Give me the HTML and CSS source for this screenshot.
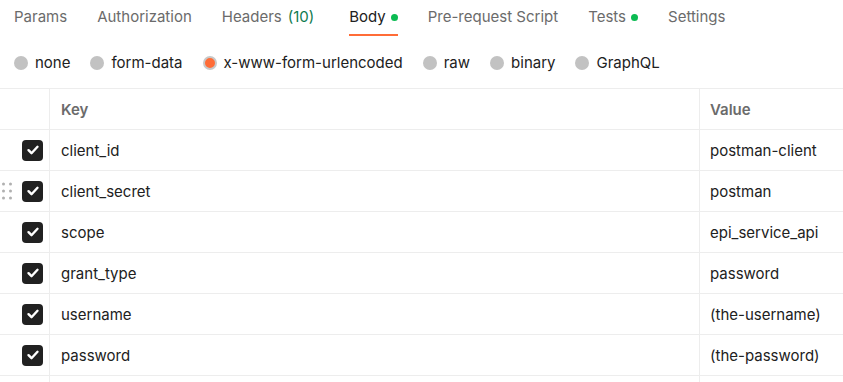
FILE: index.html
```html
<!DOCTYPE html>
<html>
<head>
<meta charset="utf-8">
<link rel="stylesheet" href="styles.css">
</head>
<body>
<div class="tabs">
  <div class="tab">Params</div>
  <div class="tab">Authorization</div>
  <div class="tab">Headers <span class="count">(10)</span></div>
  <div class="tab active">Body <span class="dot"></span></div>
  <div class="tab">Pre-request Script</div>
  <div class="tab">Tests <span class="dot"></span></div>
  <div class="tab">Settings</div>
</div>
<div class="radios">
  <label class="radio"><span class="circle"></span>none</label>
  <label class="radio"><span class="circle"></span>form-data</label>
  <label class="radio"><span class="circle on"></span>x-www-form-urlencoded</label>
  <label class="radio"><span class="circle"></span>raw</label>
  <label class="radio"><span class="circle"></span>binary</label>
  <label class="radio"><span class="circle"></span>GraphQL</label>
</div>
<div class="table">
  <div class="row head">
    <div class="cell check"></div>
    <div class="cell key">Key</div>
    <div class="cell value">Value</div>
  </div>
  <div class="row">
    <div class="cell check"><span class="box"><svg viewBox="0 0 20 20" width="20" height="20"><path d="M5.5 10.2l3 3 6-6.4" fill="none" stroke="#fff" stroke-width="2.4" stroke-linecap="round" stroke-linejoin="round"/></svg></span></div>
    <div class="cell key">client_id</div>
    <div class="cell value">postman-client</div>
  </div>
  <div class="row">
    <div class="cell check"><span class="grip"><i></i><i></i><i></i><i></i><i></i><i></i></span><span class="box"><svg viewBox="0 0 20 20" width="20" height="20"><path d="M5.5 10.2l3 3 6-6.4" fill="none" stroke="#fff" stroke-width="2.4" stroke-linecap="round" stroke-linejoin="round"/></svg></span></div>
    <div class="cell key">client_secret</div>
    <div class="cell value">postman</div>
  </div>
  <div class="row">
    <div class="cell check"><span class="box"><svg viewBox="0 0 20 20" width="20" height="20"><path d="M5.5 10.2l3 3 6-6.4" fill="none" stroke="#fff" stroke-width="2.4" stroke-linecap="round" stroke-linejoin="round"/></svg></span></div>
    <div class="cell key">scope</div>
    <div class="cell value">epi_service_api</div>
  </div>
  <div class="row">
    <div class="cell check"><span class="box"><svg viewBox="0 0 20 20" width="20" height="20"><path d="M5.5 10.2l3 3 6-6.4" fill="none" stroke="#fff" stroke-width="2.4" stroke-linecap="round" stroke-linejoin="round"/></svg></span></div>
    <div class="cell key">grant_type</div>
    <div class="cell value">password</div>
  </div>
  <div class="row">
    <div class="cell check"><span class="box"><svg viewBox="0 0 20 20" width="20" height="20"><path d="M5.5 10.2l3 3 6-6.4" fill="none" stroke="#fff" stroke-width="2.4" stroke-linecap="round" stroke-linejoin="round"/></svg></span></div>
    <div class="cell key">username</div>
    <div class="cell value">(the-username)</div>
  </div>
  <div class="row">
    <div class="cell check"><span class="box"><svg viewBox="0 0 20 20" width="20" height="20"><path d="M5.5 10.2l3 3 6-6.4" fill="none" stroke="#fff" stroke-width="2.4" stroke-linecap="round" stroke-linejoin="round"/></svg></span></div>
    <div class="cell key">password</div>
    <div class="cell value">(the-password)</div>
  </div>
  <div class="row last">
    <div class="cell check"></div>
    <div class="cell key"></div>
    <div class="cell value"></div>
  </div>
</div>
</body>
</html>
```
FILE: styles.css
```css
* { box-sizing: border-box; }
html, body { margin: 0; padding: 0; background: #fff; overflow: hidden; }
body {
  font-family: Inter, "Noto Sans", sans-serif;
  font-size: 15px;
  color: #212121;
  width: 843px;
  height: 382px;
}
.tabs {
  display: flex;
  height: 37px;
  padding-left: 14px;
}
.tab {
  color: #6b6b6b;
  margin-right: 30px;
  padding-top: 7px;
  height: 37px;
  line-height: 20px;
  display: flex;
  align-items: flex-start;
  gap: 5px;
  position: relative;
}
.tab .count { color: #0f7b4f; margin-left: 1px; margin-right: 5px; }
.tab.active { color: #212121; }
.tab.active::after {
  content: "";
  position: absolute;
  left: 0; right: 0; bottom: 1px;
  height: 2px;
  background: #ff6c37;
}
.dot {
  width: 7px; height: 7px; border-radius: 50%;
  background: #0cbb52;
  margin-top: 7px;
}
.radios {
  display: flex;
  height: 51px;
  align-items: center;
  padding-left: 14px;
}
.radio {
  display: flex;
  align-items: center;
  gap: 7px;
  margin-right: 20px;
  color: #212121;
}
.circle {
  width: 14px; height: 14px; border-radius: 50%;
  background: #c2c2c2;
}
.circle.on {
  background: #ff6c37;
  border: 2px solid #c8c8c8;
}
.table {
  border-top: 1px solid #ededed;
}
.row {
  display: grid;
  grid-template-columns: 50px 650px 1fr;
  height: 41px;
  border-bottom: 1px solid #ededed;
}
.cell {
  display: flex;
  align-items: center;
  border-right: 1px solid #ededed;
}
.cell.value { border-right: none; padding-left: 10px; }
.cell.key { padding-left: 11px; }
.head .cell { font-weight: 600; color: #6b6b6b; }
.check { justify-content: flex-end; padding-right: 6px; position: relative; }
.box {
  width: 21px; height: 21px;
  background: #212121;
  border-radius: 4px;
  display: flex; align-items: center; justify-content: center;
}
.grip {
  position: absolute;
  left: 2px; top: 50%;
  transform: translateY(-50%);
  display: grid;
  grid-template-columns: 3px 3px;
  gap: 4px 4px;
}
.grip i { width: 3px; height: 3px; border-radius: 50%; background: #b0b0b0; display: block; }
```
